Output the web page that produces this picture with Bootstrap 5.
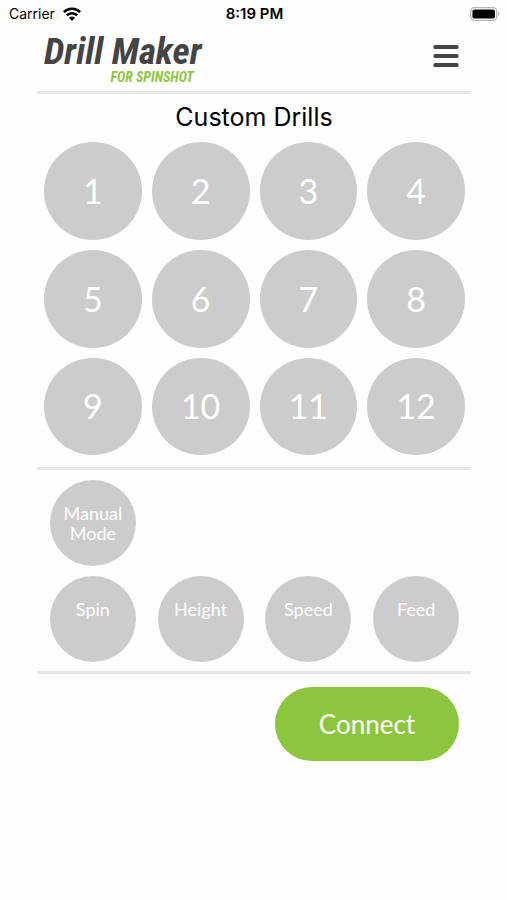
<!DOCTYPE html>
<html lang="en">
<head>
<meta charset="utf-8">
<meta name="viewport" content="width=device-width, initial-scale=1">
<title>Drill Maker for Spinshot</title>
<link href="https://cdn.jsdelivr.net/npm/bootstrap@5.3.0/dist/css/bootstrap.min.css" rel="stylesheet">
<style>
  body { background: #fefefe; color: #000; font-family: Inter, "Liberation Sans", sans-serif; }
  .status-bar { height: 28px; padding: 0 7px 0 9px; font-size: 14px; line-height: 28px; }
  .status-bar > * { flex: 1 1 0; }
  .status-time { font-size: 15px; font-weight: 600; }
  .app-shell { margin: 0 36px 0 37px; }
  .app-header { height: 63px; padding: 5px 8px 0 7px; }
  .brand { color: #444; font-family: "Liberation Sans Narrow", "Roboto Condensed", sans-serif; font-weight: 700; font-style: italic; text-decoration: none; }
  .brand-name { font-size: 37px; line-height: 37px; }
  .brand-sub { color: #8cc63f; font-size: 14px; line-height: 14px; padding-right: 8px; }
  .menu-btn { width: 34px; height: 34px; margin-top: 6px; }
  .rule { height: 3px; margin: 0; border: 0; opacity: 1; background: #e6e6e6; }
  .drill-title { margin: 0; padding: 7px 0 8px; font-size: 25px; line-height: 33px; font-weight: 400; }
  .pad-grid { display: grid; grid-template-columns: repeat(4, 1fr); gap: 10px; padding: 0 6px 0 7px; }
  .drill-grid { padding-bottom: 12px; }
  .mode-grid { padding-top: 10px; padding-bottom: 9px; }
  .round-btn { aspect-ratio: 1; border: 0; border-radius: 50%; padding: 0; background: #ccc; color: #fff; font-family: Lato, sans-serif; }
  .drill-btn { font-size: 34px; line-height: 40px; }
  .mode-btn { width: 88%; justify-self: center; font-size: 18px; line-height: 20px; }
  .setting-btn { grid-row: 2; padding-bottom: 20px; }
  .connect-row { padding: 13px 12px 0 0; }
  .connect-btn { width: 184px; height: 74px; border: 0; border-radius: 37px; background: #8cc63f; color: #fff; font-family: Lato, sans-serif; font-size: 26px; }
</style>
</head>
<body>
<div class="status-bar d-flex align-items-center">
  <div class="d-flex align-items-center gap-2">
    <span>Carrier</span>
    <svg width="18" height="14" viewBox="0 0 18 14" role="img" aria-label="Wi-Fi">
      <g fill="none" stroke="#000" stroke-width="2.6">
        <path d="M.9 5.1a11.6 11.6 0 0 1 16.2 0"/>
        <path d="M3.8 8.4a7.4 7.4 0 0 1 10.4 0"/>
      </g>
      <path d="M9 13.7 6 10.9a4.3 4.3 0 0 1 6 0Z"/>
    </svg>
  </div>
  <div class="status-time text-center">8:19 PM</div>
  <div class="d-flex justify-content-end">
    <svg width="30" height="14" viewBox="0 0 30 14" role="img" aria-label="Battery full">
      <rect x=".7" y=".7" width="26" height="12.6" rx="3.8" fill="#fff" stroke="#b5b5b5" stroke-width="1.3"/>
      <rect x="2.4" y="2.4" width="22.6" height="9.2" rx="2.1"/>
      <path d="M28.2 4.8c1.8.7 1.8 3.7 0 4.4Z" fill="#aaa"/>
    </svg>
  </div>
</div>
<div class="app-shell">
  <header class="app-header d-flex justify-content-between align-items-start">
    <a class="brand d-flex flex-column" href="#">
      <span class="brand-name">Drill Maker</span>
      <span class="brand-sub text-end">FOR SPINSHOT</span>
    </a>
    <button class="menu-btn btn border-0 p-0 d-flex align-items-center justify-content-center" type="button" aria-label="Menu">
      <svg width="26" height="22" viewBox="0 0 26 22" fill="#444" aria-hidden="true">
        <rect x=".5" width="25" height="4" rx="1.5"/><rect x=".5" y="9" width="25" height="4" rx="1.5"/><rect x=".5" y="18" width="25" height="4" rx="1.5"/>
      </svg>
    </button>
  </header>
  <hr class="rule">
  <main>
    <h1 class="drill-title text-center">Custom Drills</h1>
    <section class="pad-grid drill-grid" aria-label="Custom drills">
      <button class="round-btn drill-btn" type="button">1</button>
      <button class="round-btn drill-btn" type="button">2</button>
      <button class="round-btn drill-btn" type="button">3</button>
      <button class="round-btn drill-btn" type="button">4</button>
      <button class="round-btn drill-btn" type="button">5</button>
      <button class="round-btn drill-btn" type="button">6</button>
      <button class="round-btn drill-btn" type="button">7</button>
      <button class="round-btn drill-btn" type="button">8</button>
      <button class="round-btn drill-btn" type="button">9</button>
      <button class="round-btn drill-btn" type="button">10</button>
      <button class="round-btn drill-btn" type="button">11</button>
      <button class="round-btn drill-btn" type="button">12</button>
    </section>
    <hr class="rule">
    <section class="pad-grid mode-grid" aria-label="Manual mode">
      <button class="round-btn mode-btn" type="button">Manual<br>Mode</button>
      <button class="round-btn mode-btn setting-btn" type="button">Spin</button>
      <button class="round-btn mode-btn setting-btn" type="button">Height</button>
      <button class="round-btn mode-btn setting-btn" type="button">Speed</button>
      <button class="round-btn mode-btn setting-btn" type="button">Feed</button>
    </section>
    <hr class="rule">
    <div class="connect-row d-flex justify-content-end">
      <button class="connect-btn" type="button">Connect</button>
    </div>
  </main>
</div>
<script src="https://cdn.jsdelivr.net/npm/bootstrap@5.3.0/dist/js/bootstrap.bundle.min.js"></script>
</body>
</html>
